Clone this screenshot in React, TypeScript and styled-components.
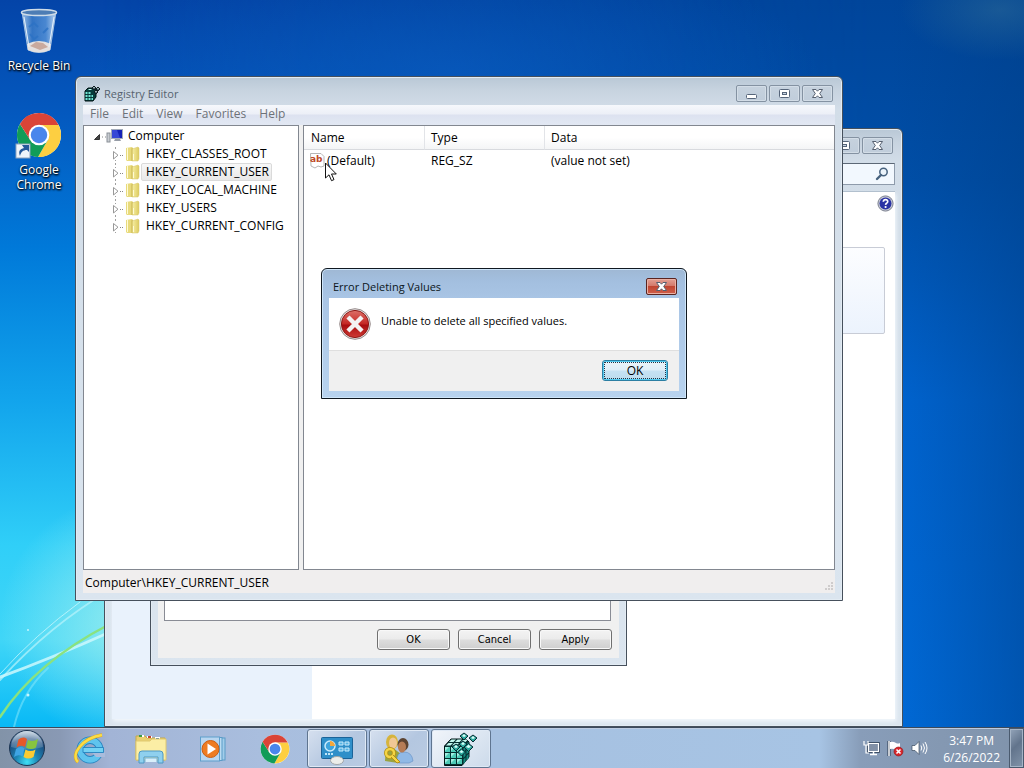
import React from 'react';
import styled, { createGlobalStyle, css } from 'styled-components';

const GlobalStyle = createGlobalStyle`
  * { box-sizing: border-box; }
  html, body, #root { height: 100%; margin: 0; }
  body {
    overflow: hidden;
    font: 12px/18px "Open Sans", "Noto Sans", sans-serif;
    color: #000;
  }
  button, input { font: inherit; color: inherit; margin: 0; }
`;

/* ---------- desktop ---------- */

const Screen = styled.div`
  height: 100vh;
  display: flex;
  flex-direction: column;
  background: #0a6ccc;
`;

const Desktop = styled.main`
  position: relative;
  flex: 1;
  min-height: 0;
  overflow: hidden;
`;

const Wallpaper = styled.svg`
  position: absolute;
  inset: 0;
  width: 100%;
  height: 100%;
`;

const Shortcuts = styled.div`
  position: relative;
  width: 78px;
  padding-top: 8px;
  display: flex;
  flex-direction: column;
  gap: 39px;
`;

const Shortcut = styled.button`
  border: 0;
  padding: 0;
  background: none;
  display: flex;
  flex-direction: column;
  align-items: center;
  gap: 3px;
  color: #fff;
  line-height: 15px;
  text-shadow: 0 1px 2px #000, 1px 1px 2px #000;
`;

const ShortcutLabel = styled.span`
  width: 70px;
`;

/* ---------- windows ---------- */

const Win = styled.section<{ $x: number; $y: number; $w: number; $h: number; $active?: boolean; $square?: boolean }>`
  position: absolute;
  left: ${p => p.$x}px;
  top: ${p => p.$y}px;
  width: ${p => p.$w}px;
  height: ${p => p.$h}px;
  display: flex;
  flex-direction: column;
  padding: 0 7px 7px;
  border: 1px solid ${p => (p.$active ? '#101820' : '#46505c')};
  border-radius: ${p => (p.$square ? '0' : '6px 6px 0 0')};
  background: ${p =>
    p.$active
      ? 'linear-gradient(#9fb8d4 0, #a3bfdf 12px, #a9c5e5 30px, #b8d3ef 100%)'
      : 'linear-gradient(#b9c8d6 0, #c8d4e0 14px, #d2dde8 32px, #dbe5ef 100%)'};
  box-shadow: inset 0 0 0 1px ${p => (p.$active ? '#cfe6fa' : '#e2ebf3')};
`;

const TitleBar = styled.header<{ $active?: boolean }>`
  flex: none;
  height: ${p => (p.$active ? 29 : 28)}px;
  padding: ${p => (p.$active ? '9px 2px 0 4px' : '8px 2px 0 1px')};
  display: flex;
  align-items: flex-start;
  gap: 3px;
`;

const Title = styled.h1<{ $active?: boolean }>`
  flex: 1;
  margin: 0;
  font-size: 11px;
  font-weight: 400;
  line-height: 18px;
  color: ${p => (p.$active ? '#0c1620' : '#56636f')};
`;

const CaptionButtons = styled.div`
  display: flex;
  gap: 2px;
`;

const CaptionButton = styled.button<{ $danger?: boolean }>`
  width: 31px;
  height: 17px;
  padding: 0;
  display: grid;
  place-items: center;
  border-radius: 2px;
  border: 1px solid ${p => (p.$danger ? '#5a2420' : '#8492a2')};
  background: ${p =>
    p.$danger
      ? 'linear-gradient(#e3a094 0, #d4796b 45%, #c04531 50%, #cf5f4b 100%)'
      : 'linear-gradient(#c6d2de, #c0cddb)'};
  box-shadow: inset 0 0 0 1px ${p => (p.$danger ? '#eab0a4' : '#d3dde7')};
`;

const MenuBar = styled.nav`
  flex: none;
  height: 20px;
  display: flex;
  background: linear-gradient(#f6f8fc 0, #eceff7 9px, #dde2f0 10px, #e2e8f3 100%);
`;

const MenuItem = styled.button`
  border: 0;
  background: none;
  padding: 0 6px 0 7px;
  line-height: 18px;
  height: 18px;
  color: #6d7278;
`;

const Panes = styled.div`
  flex: 1;
  min-height: 0;
  display: flex;
  gap: 4px;
  background: #f0f0f0;
`;

const Pane = styled.div<{ $width?: number }>`
  ${p => (p.$width ? css`flex: none; width: ${p.$width}px;` : css`flex: 1;`)}
  min-width: 0;
  border: 1px solid #828790;
  background: #fff;
`;

const Tree = styled.ul`
  list-style: none;
  margin: 0;
  padding: 1px 0 0 8px;
`;

const Branch = styled.ul`
  list-style: none;
  margin: 0;
  padding: 0 0 0 20px;
  background: linear-gradient(#fff 50%, #a0a0a0 50%) 23px 0 / 1px 4px repeat-y;
`;

const TreeRow = styled.div`
  height: 18px;
  display: flex;
  align-items: center;
`;

const TreeLabel = styled.button<{ $selected?: boolean; $root?: boolean }>`
  height: ${p => (p.$selected ? 18 : 16)}px;
  border: 1px solid ${p => (p.$selected ? '#dadada' : 'transparent')};
  border-radius: 2px;
  background: ${p => (p.$selected ? 'linear-gradient(#f8f8f8, #e8e8e8)' : 'none')};
  padding: 0 2px 0 ${p => (p.$root ? 3 : 4)}px;
  line-height: 14px;
  display: flex;
  align-items: center;
`;

const Values = styled.table`
  width: 100%;
  border-collapse: separate;
  border-spacing: 0;
  table-layout: fixed;
  text-align: left;

  th {
    height: 24px;
    padding: 1px 0 0 7px;
    font-weight: 400;
    background: linear-gradient(#fff 50%, #f4f5f6);
    border-bottom: 1px solid #d8dade;
    border-right: 1px solid #e2e4e8;
  }
  th + th, td + td { padding-left: 6px; }
  th:last-child { border-right: 0; }
  td { height: 22px; padding: 0; }
  td:first-child { padding-left: 5px; }
`;

const ValueName = styled.span`
  display: flex;
  align-items: center;
  gap: 1px;
`;

const StatusBar = styled.footer`
  flex: none;
  height: 23px;
  display: flex;
  justify-content: space-between;
  align-items: flex-end;
  padding-left: 2px;
  background: #f0eeee;
`;

const StatusText = styled.span`
  line-height: 18px;
  align-self: flex-start;
  padding-top: 4px;
`;

const ErrorBody = styled.div`
  flex: none;
  height: 53px;
  padding: 10px 10px 0;
  display: flex;
  gap: 10px;
  background: #fff;
  border-bottom: 1px solid #dfdfdf;
`;

const Message = styled.p`
  margin: 4px 0 0;
  line-height: 18px;
  font-size: 11px;
`;

const ErrorActions = styled.div`
  flex: 1;
  padding: 9px 11px 0;
  display: flex;
  justify-content: flex-end;
  align-items: flex-start;
  background: #f0f0f0;
`;

const DefaultButton = styled.button`
  width: 66px;
  height: 21px;
  padding: 0;
  border: 1px solid #2c7fa3;
  border-radius: 3px;
  background: linear-gradient(#edf5fa 0, #dfeef8 48%, #c6e2f3 52%, #bcdcee 100%);
  box-shadow: inset 0 0 0 1px #54cbf0;
  outline: 1px dotted #234;
  outline-offset: -3px;
  line-height: 17px;
`;

const PlainButton = styled.button`
  width: 73px;
  height: 21px;
  padding: 0;
  border: 1px solid #707070;
  border-radius: 3px;
  background: linear-gradient(#f3f3f3 0, #ebebeb 48%, #dddddd 52%, #cfcfcf 100%);
  box-shadow: inset 0 0 0 1px #f8f8f8;
  font-family: "DejaVu Sans Condensed", "DejaVu Sans", sans-serif;
  font-size: 11px;
  line-height: 18px;
`;

const Sheet = styled.div`
  flex: 1;
  display: flex;
  flex-direction: column;
  padding: 0 7px 8px 6px;
  gap: 8px;
  background: #f0f0f0;
`;

const SheetPage = styled.div`
  flex: 1;
  margin-right: 1px;
  border: 1px solid #898c95;
  background: #fff;
`;

const SheetActions = styled.div`
  display: flex;
  justify-content: flex-end;
  gap: 8px;
`;

const SearchRow = styled.div`
  flex: none;
  height: 35px;
  padding-top: 6px;
  display: flex;
  justify-content: flex-end;
  border-bottom: 1px solid #aab8c8;
`;

const SearchBox = styled.label`
  width: 240px;
  height: 22px;
  display: flex;
  align-items: center;
  padding-right: 5px;
  border: 1px solid #8e9bab;
  border-top-color: #5c6876;
  background: #f2f8fe;
`;

const SearchInput = styled.input`
  flex: 1;
  min-width: 0;
  border: 0;
  padding: 0 4px;
  background: none;
  outline: 0;
`;

const Explorer = styled.div`
  flex: 1;
  min-height: 0;
  display: flex;
  background: #fff;
  box-shadow: 1px 2px 4px #f4f9fd;
`;

const ExplorerNav = styled.aside`
  width: 200px;
  background: #e9f2fc;
`;

const ExplorerBody = styled.div`
  flex: 1;
  padding: 3px 1px 0 20px;
  display: flex;
  flex-direction: column;
  gap: 35px;
`;

const HelpButton = styled.button`
  align-self: flex-end;
  border: 0;
  padding: 0;
  background: none;
  display: flex;
`;

const InfoCard = styled.div`
  height: 87px;
  margin-right: 9px;
  border: 1px solid #c8ccd6;
  border-radius: 2px;
  background: linear-gradient(#fcfdff, #ecf3fd);
`;

const Pointer = styled.svg`
  position: absolute;
  left: 324px;
  top: 162px;
`;

/* ---------- taskbar ---------- */

const Taskbar = styled.footer`
  flex: none;
  height: 41px;
  display: flex;
  border-top: 1px solid #3c4a5c;
  box-shadow: inset 0 1px 0 #bccbe0;
  background: linear-gradient(90deg, #8293a8 0, #8999b4 60px, #a2b4d6 110px, #a9bede 260px, #a6c1e1 500px, #a7c4e4 80%, #889db9 84%, #8093ab 100%);
`;

const TaskButton = styled.button<{ $state?: 'open' | 'active' }>`
  width: 60px;
  height: 39px;
  margin: 1px 1px 0;
  padding: 0;
  display: grid;
  place-items: center;
  border-radius: 3px;
  border: 1px solid ${p => (p.$state ? '#5f7590' : 'transparent')};
  background: ${p =>
    p.$state === 'active'
      ? 'linear-gradient(135deg, #f1f5fa, #dbe5f1 60%, #ccdaea)'
      : p.$state === 'open'
      ? 'linear-gradient(135deg, #d6e0ef, #b4c7e0 55%, #b9cbe2)'
      : 'none'};
  box-shadow: ${p => (p.$state ? 'inset 0 0 0 1px #dfe9f5' : 'none')};
`;

const StartButton = styled.button`
  width: 58px;
  border: 0;
  padding: 0 0 0 8px;
  background: none;
  display: flex;
  align-items: center;
`;

const Tray = styled.div`
  margin-left: auto;
  display: flex;
  align-items: center;
  gap: 7px;
`;

const Clock = styled.time`
  margin: 0 2px 0 8px;
  padding-top: 2px;
  text-align: center;
  color: #fff;
  line-height: 17px;
`;

const ShowDesktop = styled.button`
  align-self: stretch;
  width: 15px;
  padding: 0;
  border: 1px solid #4a5a6e;
  background: linear-gradient(135deg, #94a5ba, #62748c 45%, #8193a9);
  box-shadow: inset 0 0 0 1px #a5b4c6;
`;

/* ---------- drawings ---------- */

const MinGlyph = () => (
  <svg width="13" height="13" viewBox="0 0 13 13"><rect x="1.500" y="7.500" width="10" height="4" rx="1" fill="#fff" stroke="#56657a" /></svg>
);
const MaxGlyph = () => (
  <svg width="13" height="13" viewBox="0 0 13 13"><rect x="1.500" y="2.500" width="10" height="8" rx="1" fill="#fff" stroke="#56657a" /><rect x="4.500" y="5.500" width="4" height="2" fill="#c9d5e2" stroke="#56657a" /></svg>
);
const CloseGlyph = () => (
  <svg width="13" height="13" viewBox="0 0 13 13">
    <path d="M1.500 2.500H5L6.500 4.200L8 2.500H11.500L8.700 6.500L11.500 10.500H8L6.500 8.800L5 10.500H1.500L4.300 6.500Z" fill="#fff" stroke="#566070" strokeLinejoin="round" />
  </svg>
);

const frontTiles = [0, 1, 2].flatMap(r => [0, 1, 2].map(c => [1 + c * 6, 15 + r * 6]));
const RegIcon = ({ size }: { size: number }) => (
  <svg width={size} height={size} viewBox="0 0 34 34">
    <path d="M.5 14L7 7H22L25 10V25L18 33.500H.5Z" fill="#052f30" stroke="#001616" />
    {frontTiles.map(([x, y]) => (
      <g key={`${x}-${y}`}>
        <rect x={x} y={y} width="5" height="5" fill="#4ccab6" />
        <path d={`M${x} ${y}h4l-4 4z`} fill="#a2efe1" />
      </g>
    ))}
    {[0, 1].map(r => [0, 1, 2].map(c => (
      <path key={`${r}${c}`} d={`M${2 + c * 6 + r * 3} ${13.500 - r * 3.500}l2.500-2.500h4.500l-2.500 2.500z`} fill="#c4faf0" />
    )))}
    {[0, 1, 2].map(r => [0, 1].map(c => (
      <path key={`${r}${c}`} d={`M${19.500 + c * 3} ${15.500 + r * 6 - c * 3.500}l2-2.300v4.500l-2 2.300z`} fill="#178a80" />
    )))}
    {[[20, 4, 3], [29, 6, 3], [24.500, 15, 3.500], [12, 15, 3], [17.500, 20, 3], [19, 12, 3]].map(([x, y, r]) => (
      <g key={x}>
        <path d={`M${x} ${y - r}L${x + r + 1} ${y}L${x} ${y + r + 1}L${x - r - 1} ${y}Z`} fill="#2aa79c" stroke="#082e34" />
        <path d={`M${x} ${y - r + 1}L${x + r - 1} ${y}L${x} ${y + 1}L${x - r + 1} ${y}Z`} fill="#d8fff8" />
      </g>
    ))}
  </svg>
);

const RegSmallIcon = () => (
  <svg width="17" height="17" viewBox="0 0 17 17">
    <path d="M1 6L4 3H12V12L9 16H1Z" fill="#083c3c" stroke="#001414" />
    <path d="M1.500 7h2v2h-2zM4.500 7h2v2h-2zM1.500 10h2v2h-2zM4.500 10h2v2h-2zM1.500 13h2v2h-2zM4.500 13h2v2h-2zM7.500 10h1.500v2h-1.500zM7.500 13h1.500v2h-1.500z" fill="#6fe5d3" />
    <path d="M4 5l1-1h3l-1 1z" fill="#c4faf0" />
    <path d="M10 1l2 2-2 2-2-2zM14 2l2 2-2 2-2-2zM12 5l2 2-2 2-2-2z" fill="#4f6670" stroke="#101c22" />
    <path d="M10 2l1 1h-2zM14 3l1 1h-2zM12 6l1 1h-2z" fill="#e0fffa" />
  </svg>
);

const ChromeIcon = ({ size }: { size: number }) => (
  <svg width={size} height={size} viewBox="0 0 48 48">
    <circle cx="24" cy="24" r="23" fill="#fff" />
    <path d="M24 13.500H44.400A23 23 0 0 1 23 47L33.100 29.300Z" fill="#fdcf41" />
    <path d="M14.900 29.300L4.100 12.500A23 23 0 0 0 23 47L33.100 29.300Z" fill="#119c58" />
    <path d="M24 13.500H44.400A23 23 0 0 0 4.100 12.500L14.900 29.300Z" fill="#da4437" />
    <circle cx="24" cy="24" r="10.800" fill="#fff" />
    <circle cx="24" cy="24" r="8.600" fill="#4a86ec" />
  </svg>
);

const BinIcon = () => (
  <svg width="48" height="47" viewBox="0 0 48 47">
    <defs>
      <linearGradient id="bin" x1="0" x2="1"><stop offset="0" stopColor="#b9d6f2" stopOpacity=".85" /><stop offset=".3" stopColor="#3e7fca" stopOpacity=".8" /><stop offset=".7" stopColor="#5b97da" stopOpacity=".8" /><stop offset="1" stopColor="#d0e4f7" stopOpacity=".9" /></linearGradient>
    </defs>
    <path d="M7 4L13 42Q24 47 35 42L41 4Z" fill="url(#bin)" stroke="#9dbde0" />
    <path d="M12 36Q24 30 36 36L35 42Q24 47 13 42Z" fill="#e4e0df" />
    <path d="M15 38l6-4 7 1 5 4-8 3z" fill="#c9a99d" />
    <path d="M14 19l5-4 4 4M28 25l5-5M15 26l4 5 4-3" fill="none" stroke="#2c72c4" strokeWidth="2" opacity=".8" />
    <ellipse cx="24" cy="4.500" rx="17.500" ry="3" fill="#4d7db5" stroke="#cfdce8" strokeWidth="1.500" />
    <path d="M9 9L14 39M39 9L34 39" stroke="#e8f2fc" strokeWidth="1" />
  </svg>
);

const ChromeShortcut = () => (
  <svg width="48" height="47" viewBox="0 0 48 47">
    <svg x="1" y="0" width="46" height="46"><ChromeIcon size={46} /></svg>
    <rect x="1" y="32" width="14" height="14" fill="#eef4fa" stroke="#8da3bd" />
    <path d="M5 44c-2-5 0-7 4-8l-2-3h7v7l-2-2c-4 0-6 2-7 6z" fill="#24599b" />
  </svg>
);

const FolderIcon = () => (
  <svg width="16" height="16" viewBox="0 0 16 16">
    <defs><linearGradient id="fold" x1="0" x2="1"><stop offset="0" stopColor="#f8f0a6" /><stop offset="1" stopColor="#dccb60" /></linearGradient></defs>
    <path d="M1 2l6-1 1 1v13H2l-1-1z" fill="#e8da7c" />
    <path d="M7 3l6-2 1 1v11l-1 2H7z" fill="url(#fold)" stroke="#d6c468" strokeWidth=".5" />
    <path d="M2.500 2v12M8.500 8v6" stroke="#fffbd4" />
    <path d="M7 2v13" stroke="#c7b24c" strokeWidth=".8" />
  </svg>
);

const ComputerIcon = () => (
  <svg width="18" height="16" viewBox="0 0 18 16">
    <rect x="1" y="5" width="3" height="9" fill="#c9cdd2" stroke="#8a9097" />
    <rect x="5.500" y="1.500" width="11" height="9" fill="#1522b8" stroke="#a3abba" />
    <path d="M6 2h5l3 8H6z" fill="#4457e2" opacity=".7" />
    <path d="M9 11h5l1 2H8z" fill="#969ca6" />
  </svg>
);

const OpenArrow = () => (
  <svg width="14" height="16" viewBox="0 0 14 16"><path d="M2.500 11.500H7.500V6.500Z" fill="#454545" stroke="#333" /><path d="M10 9h1M13 9h1" stroke="#888" /></svg>
);
const ClosedArrow = () => (
  <svg width="13" height="16" viewBox="0 0 13 16"><path d="M1 4h6v10H1z" fill="#fff" /><path d="M1.500 5.500V13L6 9.200Z" fill="#fff" stroke="#999" /><path d="M8 9.500h1M10 9.500h1" stroke="#888" /></svg>
);

const StringIcon = () => (
  <svg width="17" height="16" viewBox="0 0 17 16">
    <path d="M1.500 .5H12l3 3V13l-3 1-3-1-3 2-4-2z" fill="#fff" stroke="#b6b6b6" />
    <text x="1" y="9" fontFamily="DejaVu Sans, sans-serif" fontSize="9" fontWeight="700" fill="#c04a28">ab</text>
  </svg>
);

const ErrorIcon = () => (
  <svg width="32" height="32" viewBox="0 0 32 32">
    <defs><linearGradient id="err" x1="0" y1="0" x2="0" y2="1"><stop offset="0" stopColor="#dc7068" /><stop offset=".48" stopColor="#c62a26" /><stop offset=".55" stopColor="#a90e10" /><stop offset="1" stopColor="#cf3a34" /></linearGradient></defs>
    <circle cx="16" cy="16" r="15.300" fill="#e9e4e4" stroke="#958a8a" />
    <circle cx="16" cy="16" r="13.600" fill="url(#err)" stroke="#8d1916" />
    <path d="M10.500 10.500L21.500 21.500M21.500 10.500L10.500 21.500" stroke="#f4f2f2" strokeWidth="4.400" strokeLinecap="square" />
  </svg>
);

const HelpIcon = () => (
  <svg width="17" height="17" viewBox="0 0 17 17">
    <circle cx="8.500" cy="8.500" r="7.600" fill="#c3c6d2" stroke="#7c8190" />
    <circle cx="8.500" cy="8.500" r="6" fill="#2a32a4" />
    <path d="M6.300 6.800c.2-3 4.600-2.700 4.400-.1-.1 1.500-2 1.500-2.100 3.200" fill="none" stroke="#fff" strokeWidth="1.700" />
    <circle cx="8.600" cy="12" r="1.100" fill="#fff" />
  </svg>
);

const SearchIcon = () => (
  <svg width="14" height="14" viewBox="0 0 14 14"><circle cx="8.500" cy="5" r="3.700" fill="#eaf3fa" stroke="#47627e" strokeWidth="1.500" /><path d="M6 8L2 12" stroke="#47627e" strokeWidth="2.400" strokeLinecap="round" /></svg>
);

const Grip = () => (
  <svg width="12" height="12" viewBox="0 0 12 12">
    {[[8, 1], [8, 4], [8, 7], [5, 4], [5, 7], [2, 7]].map(([x, y]) => <rect key={`${x}${y}`} x={x} y={y} width="2" height="2" fill="#cfcccc" />)}
  </svg>
);

const StartOrb = () => (
  <svg width="38" height="38" viewBox="0 0 38 38">
    <defs>
      <radialGradient id="orb" cx=".5" cy=".9" r=".9"><stop offset="0" stopColor="#3fe0f5" /><stop offset=".35" stopColor="#1d86b5" /><stop offset=".75" stopColor="#1c4a7c" /><stop offset="1" stopColor="#7fa0bd" /></radialGradient>
      <linearGradient id="gloss" x1="0" x2="0" y1="0" y2="1"><stop offset="0" stopColor="#fff" stopOpacity=".65" /><stop offset="1" stopColor="#fff" stopOpacity=".12" /></linearGradient>
    </defs>
    <circle cx="19" cy="19" r="17.500" fill="url(#orb)" stroke="#1d3552" />
    <path d="M3 18a16 16 0 0 1 32 0Q19 23 3 18z" fill="url(#gloss)" />
    <path d="M10.500 10.500q4.500-3.500 8.500-.5l-2 8q-4.500-2.500-8.500.5z" fill="#e5592a" />
    <path d="M20 11q5 2.500 10-1l-2 8.500q-5 3-10 0z" fill="#87c440" />
    <path d="M8 20q4.500-3.500 8.500-.5l-2 8q-4-2.500-8.500.5z" fill="#3fa4e4" />
    <path d="M17.500 20.500q5 3 10 0l-2 7.500q-5 3-10 0z" fill="#fbcb33" />
  </svg>
);

const IeIcon = () => (
  <svg width="32" height="32" viewBox="0 0 32 32">
    <circle cx="17" cy="17" r="9.800" fill="none" stroke="#2583c0" strokeWidth="7.500" />
    <circle cx="17" cy="17" r="9.800" fill="none" stroke="#5fc4ee" strokeWidth="5.800" />
    <path d="M19 19.500H32V24H23Z" fill="#a9bcdc" />
    <path d="M10 14.500H30.500V19.500H10Z" fill="#74d2f4" stroke="#2583c0" strokeWidth=".9" />
    <path d="M5 29C-3 22 9 5 29 2" fill="none" stroke="#d9a520" strokeWidth="3.400" />
    <path d="M5 29C-3 22 9 5 29 2" fill="none" stroke="#fbdc45" strokeWidth="2.400" />
  </svg>
);

const ExplorerIcon = () => (
  <svg width="34" height="32" viewBox="0 0 34 32">
    <path d="M2 3h9l2 2h18v22H2z" fill="#e9cf70" stroke="#c5a94b" />
    <path d="M5 3h5M13 4h5M21 5h5" stroke="#fff" strokeWidth="2" />
    <path d="M5 3h3" stroke="#3b9c46" strokeWidth="2" /><path d="M14 4h3" stroke="#c5432d" strokeWidth="2" /><path d="M22 6h3" stroke="#3878b8" strokeWidth="2" />
    <path d="M2 8h14l2-2h14v21H2z" fill="#fbeea5" stroke="#dfc871" />
    <path d="M5 30V21q0-3 3-3h18q3 0 3 3v9h-5v-6H10v6z" fill="#8fd0ee" stroke="#4e98c4" />
    <path d="M11 29v-4h12v4" fill="#d9effa" stroke="#76b5d6" />
  </svg>
);

const MediaIcon = () => (
  <svg width="28" height="28" viewBox="0 0 28 28">
    <rect x="9" y="3" width="17" height="22" fill="#a2cdea" stroke="#5b9cc7" />
    <rect x="6" y="2.500" width="17" height="23" fill="#bcdcf2" stroke="#5b9cc7" />
    <rect x="1.500" y="2" width="19" height="24" fill="#b9d6f0" stroke="#5f9fcc" />
    <circle cx="11.500" cy="14" r="8.500" fill="#ee7c22" stroke="#cc5f12" />
    <path d="M8.500 8.500L17 14L8.500 19.500Z" fill="#fff" />
  </svg>
);

const ControlPanelIcon = () => (
  <svg width="34" height="32" viewBox="0 0 34 32">
    <rect x="1.500" y="4.500" width="31" height="21" rx="1" fill="#2f8fc9" stroke="#1b6398" />
    <circle cx="10" cy="13" r="5" fill="#3fa4dc" stroke="#c9ebfc" strokeWidth="1.500" />
    <path d="M10 13V8a5 5 0 0 1 5 5z" fill="#f3a73c" />
    <path d="M19 9h4v3h-4zM25 9h4v3h-4zM19 15h4v3h-4zM25 15h4v3h-4z" fill="#58b4e4" stroke="#c9ebfc" />
    <path d="M5 21h8" stroke="#bfe5f8" strokeWidth="2" strokeDasharray="2 1" />
    <ellipse cx="17" cy="27.500" rx="6.500" ry="4" fill="#ecedea" stroke="#a3a7a8" />
  </svg>
);

const UsersIcon = () => (
  <svg width="32" height="32" viewBox="0 0 32 32">
    <path d="M2 28Q2 16 10 15l8 6-3 9z" fill="#9aa33f" />
    <ellipse cx="9" cy="9" rx="6" ry="7.500" fill="#d6b43c" />
    <ellipse cx="10" cy="10" rx="4" ry="5.500" fill="#f0c795" />
    <path d="M14 29Q13 19 21 19q8 0 9 9l-4 2H16z" fill="#90b9e6" stroke="#648fc2" strokeWidth=".6" />
    <ellipse cx="20" cy="11.500" rx="5.500" ry="6.500" fill="#5c4330" />
    <ellipse cx="19" cy="14" rx="4" ry="5.500" fill="#b67c55" />
    <circle cx="7" cy="20" r="4" fill="none" stroke="#b48e17" strokeWidth="4" />
    <circle cx="7" cy="20" r="4" fill="none" stroke="#f3d545" strokeWidth="2.500" />
    <path d="M10 22l7 7-3 1-6-6" fill="#f3d545" stroke="#b48e17" />
  </svg>
);

const NetworkIcon = () => (
  <svg width="17" height="16" viewBox="0 0 17 16"><path d="M5.500 3.500H15.500V11.500H5.500Z" fill="#7a8aa0" stroke="#27384e" strokeWidth="2.600" /><path d="M5.500 3.500H15.500V11.500H5.500Z" fill="#8190a6" stroke="#fff" strokeWidth="1.200" /><path d="M10.500 12v2M7 14.500h7" stroke="#fff" strokeWidth="1.500" /><path d="M1 1v4h4V1M3 5v8h3" fill="none" stroke="#fff" strokeWidth="1.200" /></svg>
);
const FlagIcon = () => (
  <svg width="17" height="17" viewBox="0 0 17 17"><path d="M2 1v15" stroke="#26374c" strokeWidth="3" /><path d="M2 1v15" stroke="#fff" strokeWidth="1.500" /><path d="M3 2q3-1 6 1 2 1 4 0v7q-2 1-4 0-3-2-6-1z" fill="#fff" /><circle cx="11.500" cy="11.500" r="4.500" fill="#d8262c" stroke="#8e1518" strokeWidth=".6" /><path d="M9.500 9.500l4 4M13.500 9.500l-4 4" stroke="#fff" strokeWidth="1.600" /></svg>
);
const SoundIcon = () => (
  <svg width="17" height="16" viewBox="0 0 17 16"><path d="M1 5.500h3l4-4v13l-4-4H1z" fill="#fff" stroke="#3a4a5f" strokeWidth=".7" /><path d="M10 5.500q1.500 2.500 0 5M12 3.500q3 4.500 0 9M14 2q4 6 0 12" fill="none" stroke="#fff" /></svg>
);

const keys = ['HKEY_CLASSES_ROOT', 'HKEY_CURRENT_USER', 'HKEY_LOCAL_MACHINE', 'HKEY_USERS', 'HKEY_CURRENT_CONFIG'];
const menus = ['File', 'Edit', 'View', 'Favorites', 'Help'];

export default function App() {
  return (
    <>
      <GlobalStyle />
      <Screen>
        <Desktop>
          <Wallpaper viewBox="0 0 1024 727" preserveAspectRatio="none">
            <defs>
              <linearGradient id="sky" x1="0" y1="0" x2="0" y2="1">
                <stop offset="0" stopColor="#0444a8" /><stop offset=".16" stopColor="#0459bf" /><stop offset=".34" stopColor="#0079d9" />
                <stop offset=".55" stopColor="#12a4ec" /><stop offset=".75" stopColor="#30cff8" /><stop offset=".88" stopColor="#40d6f7" /><stop offset="1" stopColor="#08b9f6" />
              </linearGradient>
              <linearGradient id="deep" x1="0" y1="0" x2="0" y2="1">
                <stop offset="0" stopColor="#00459a" /><stop offset=".25" stopColor="#004fa8" /><stop offset=".55" stopColor="#0064d0" /><stop offset="1" stopColor="#006ad8" />
              </linearGradient>
              <linearGradient id="fade" x1="0" x2="1"><stop offset=".1" stopColor="#000" /><stop offset=".85" stopColor="#fff" /></linearGradient>
              <linearGradient id="edge" x1="0" x2="1"><stop offset=".87" stopColor="#003f88" stopOpacity="0" /><stop offset="1" stopColor="#003f88" stopOpacity=".5" /></linearGradient>
              <radialGradient id="haze"><stop offset="0" stopColor="#bdf6e8" stopOpacity=".75" /><stop offset="1" stopColor="#bdf6f2" stopOpacity="0" /></radialGradient>
              <radialGradient id="topglow"><stop offset="0" stopColor="#0c60c6" stopOpacity=".5" /><stop offset="1" stopColor="#0c60c6" stopOpacity="0" /></radialGradient>
              <radialGradient id="corner"><stop offset="0" stopColor="#2c6a98" stopOpacity=".55" /><stop offset="1" stopColor="#2c6a98" stopOpacity="0" /></radialGradient>
              <mask id="right"><rect width="1024" height="727" fill="url(#fade)" /></mask>
            </defs>
            <rect width="1024" height="727" fill="url(#sky)" />
            <rect width="1024" height="727" fill="url(#deep)" mask="url(#right)" />
            <rect width="1024" height="727" fill="url(#edge)" />
            <ellipse cx="450" cy="70" rx="370" ry="120" fill="url(#topglow)" />
            <ellipse cx="1000" cy="10" rx="100" ry="50" fill="url(#corner)" />
            <ellipse cx="145" cy="620" rx="145" ry="130" fill="url(#haze)" />
            <g fill="none" strokeLinecap="round">
              <path d="M0 680Q50 625 110 590" stroke="#b9f4fb" strokeWidth="2" opacity=".7" />
              <path d="M0 674Q35 635 80 602" stroke="#d5fafd" strokeWidth="1" opacity=".7" />
              <path d="M0 677Q50 659 110 632" stroke="#cdf8fd" strokeWidth="3" opacity=".85" />
              <path d="M14 727Q22 692 48 668" stroke="#8be9fb" strokeWidth="2" opacity=".5" />
              <path d="M0 717Q36 662 110 624" stroke="#8ae27f" strokeWidth="2.500" />
            </g>
            <circle cx="28" cy="695" r="1.500" fill="#c5f6ff" /><circle cx="28" cy="630" r="1" fill="#c5f6ff" />
          </Wallpaper>

          <Shortcuts>
            <Shortcut><BinIcon /><ShortcutLabel>Recycle Bin</ShortcutLabel></Shortcut>
            <Shortcut><ChromeShortcut /><ShortcutLabel>Google Chrome</ShortcutLabel></Shortcut>
          </Shortcuts>

          <Win $x={104} $y={128} $w={799} $h={599} aria-label="System">
            <TitleBar>
              <Title />
              <CaptionButtons>
                <CaptionButton aria-label="Minimize"><MinGlyph /></CaptionButton>
                <CaptionButton aria-label="Maximize"><MaxGlyph /></CaptionButton>
                <CaptionButton aria-label="Close"><CloseGlyph /></CaptionButton>
              </CaptionButtons>
            </TitleBar>
            <SearchRow>
              <SearchBox><SearchInput aria-label="Search" /><SearchIcon /></SearchBox>
            </SearchRow>
            <Explorer>
              <ExplorerNav />
              <ExplorerBody>
                <HelpButton aria-label="Help"><HelpIcon /></HelpButton>
                <InfoCard />
              </ExplorerBody>
            </Explorer>
          </Win>

          <Win $x={150} $y={240} $w={477} $h={426} $square aria-label="Properties">
            <TitleBar />
            <Sheet>
              <SheetPage />
              <SheetActions>
                <PlainButton>OK</PlainButton>
                <PlainButton>Cancel</PlainButton>
                <PlainButton>Apply</PlainButton>
              </SheetActions>
            </Sheet>
          </Win>

          <Win $x={75} $y={76} $w={768} $h={525} aria-labelledby="regedit">
            <TitleBar>
              <RegSmallIcon />
              <Title id="regedit">Registry Editor</Title>
              <CaptionButtons>
                <CaptionButton aria-label="Minimize"><MinGlyph /></CaptionButton>
                <CaptionButton aria-label="Maximize"><MaxGlyph /></CaptionButton>
                <CaptionButton aria-label="Close"><CloseGlyph /></CaptionButton>
              </CaptionButtons>
            </TitleBar>
            <MenuBar>{menus.map(m => <MenuItem key={m}>{m}</MenuItem>)}</MenuBar>
            <Panes>
              <Pane $width={216}>
                <Tree>
                  <li>
                    <TreeRow><OpenArrow /><ComputerIcon /><TreeLabel $root>Computer</TreeLabel></TreeRow>
                    <Branch>
                      {keys.map(k => (
                        <li key={k}>
                          <TreeRow><ClosedArrow /><FolderIcon /><TreeLabel $selected={k === 'HKEY_CURRENT_USER'}>{k}</TreeLabel></TreeRow>
                        </li>
                      ))}
                    </Branch>
                  </li>
                </Tree>
              </Pane>
              <Pane>
                <Values>
                  <colgroup><col width="121" /><col width="120" /><col /></colgroup>
                  <thead><tr><th>Name</th><th>Type</th><th>Data</th></tr></thead>
                  <tbody>
                    <tr><td><ValueName><StringIcon />(Default)</ValueName></td><td>REG_SZ</td><td>(value not set)</td></tr>
                  </tbody>
                </Values>
              </Pane>
            </Panes>
            <StatusBar><StatusText>Computer\HKEY_CURRENT_USER</StatusText><Grip /></StatusBar>
          </Win>

          <Win $x={321} $y={268} $w={366} $h={131} $active role="alertdialog" aria-labelledby="err-title">
            <TitleBar $active>
              <Title id="err-title" $active>Error Deleting Values</Title>
              <CaptionButton $danger aria-label="Close"><CloseGlyph /></CaptionButton>
            </TitleBar>
            <ErrorBody><ErrorIcon /><Message>Unable to delete all specified values.</Message></ErrorBody>
            <ErrorActions><DefaultButton>OK</DefaultButton></ErrorActions>
          </Win>

          <Pointer width="14" height="21" viewBox="0 0 14 21">
            <path d="M1.500 1V16L5 12.800L7.500 18.700L10 17.600L7.500 12H12.300Z" fill="#fff" stroke="#111" />
          </Pointer>
        </Desktop>

        <Taskbar>
          <StartButton aria-label="Start"><StartOrb /></StartButton>
          <TaskButton aria-label="Internet Explorer"><IeIcon /></TaskButton>
          <TaskButton aria-label="Windows Explorer"><ExplorerIcon /></TaskButton>
          <TaskButton aria-label="Media Player"><MediaIcon /></TaskButton>
          <TaskButton aria-label="Google Chrome"><ChromeIcon size={30} /></TaskButton>
          <TaskButton $state="open" aria-label="Control Panel"><ControlPanelIcon /></TaskButton>
          <TaskButton $state="open" aria-label="User Accounts"><UsersIcon /></TaskButton>
          <TaskButton $state="active" aria-label="Registry Editor"><RegIcon size={34} /></TaskButton>
          <Tray>
            <NetworkIcon />
            <FlagIcon />
            <SoundIcon />
            <Clock>3:47 PM<br />6/26/2022</Clock>
            <ShowDesktop aria-label="Show desktop" />
          </Tray>
        </Taskbar>
      </Screen>
    </>
  );
}
